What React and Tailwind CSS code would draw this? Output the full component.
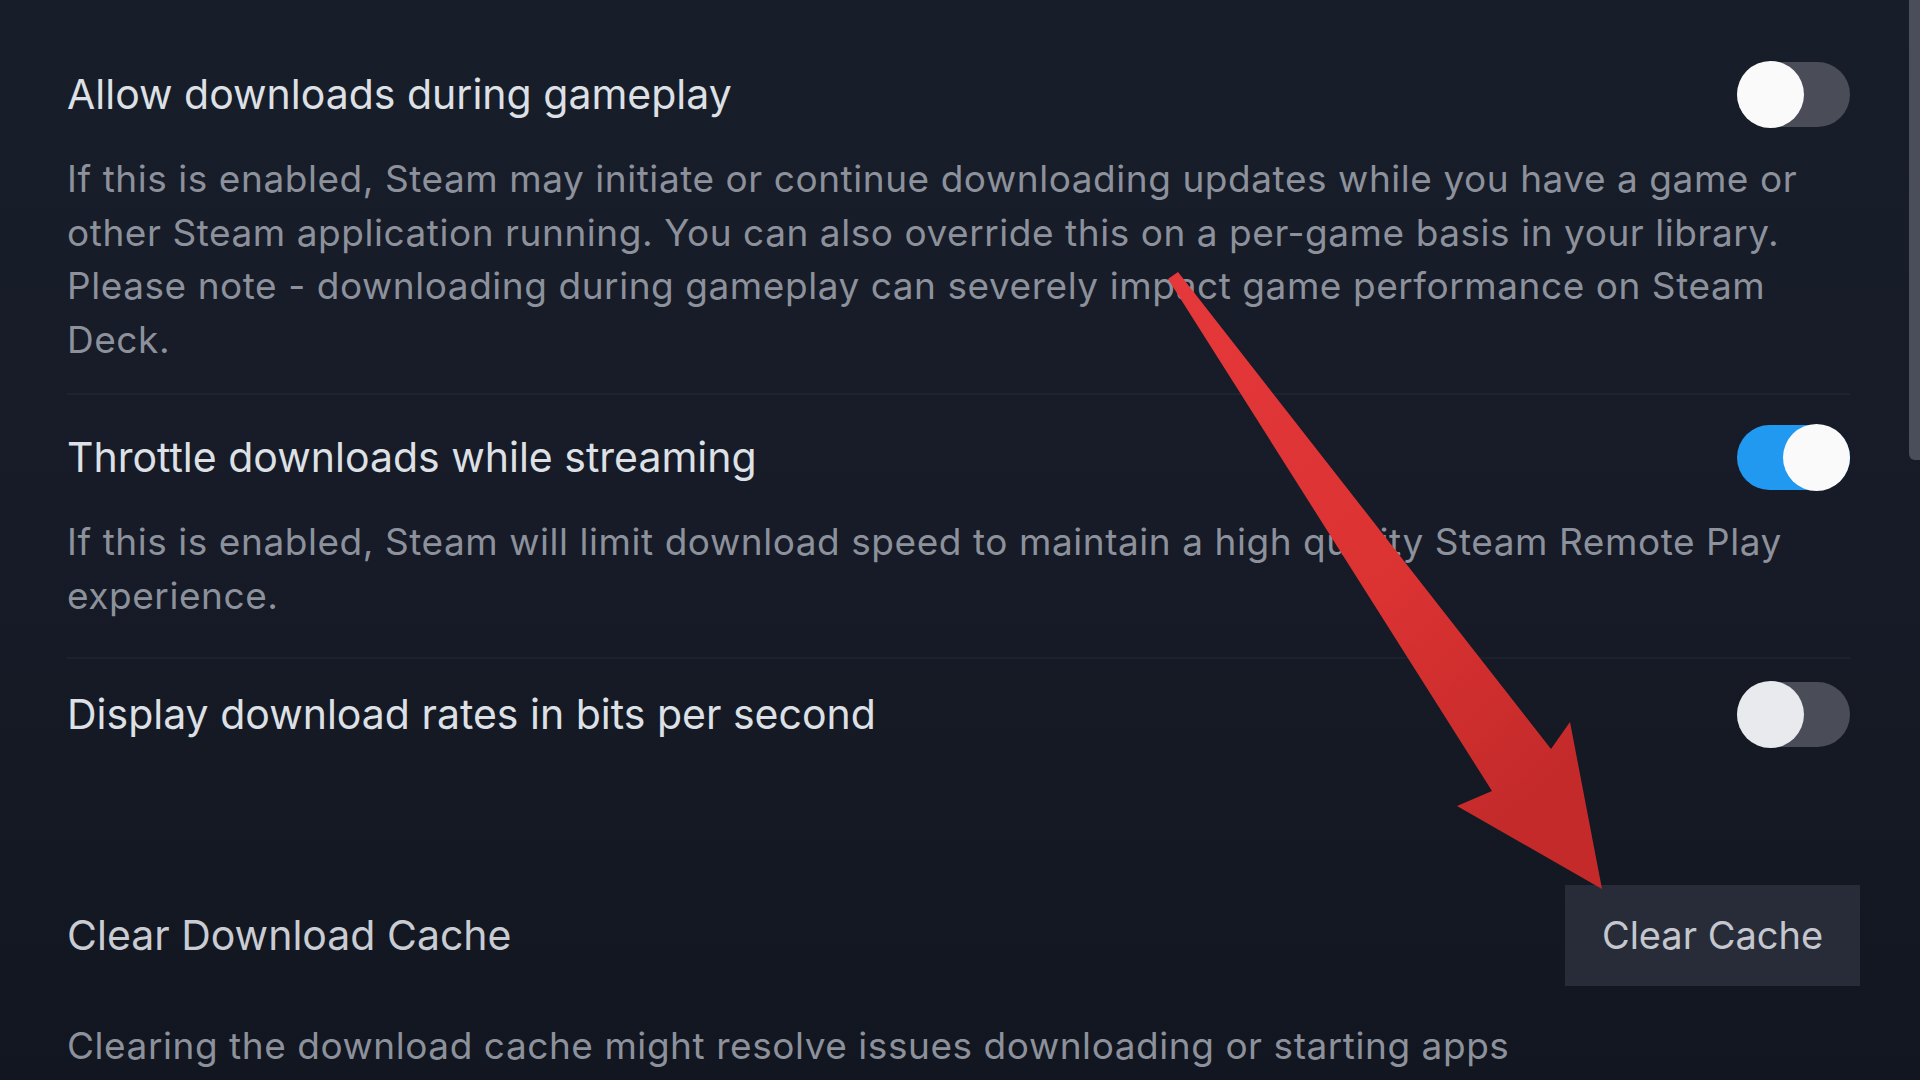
import React from "react";

function Toggle({ on, dim }) {
  return (
    <div
      className={
        on
          ? "w-[113px] h-[65px] rounded-full bg-[#2299f0] flex items-center justify-end shrink-0"
          : "w-[113px] h-[65px] rounded-full bg-[#4a4d58] flex items-center justify-start shrink-0"
      }
    >
      <div
        className={
          dim
            ? "w-[67px] h-[67px] rounded-full bg-[#e9eaed] shrink-0"
            : "w-[67px] h-[67px] rounded-full bg-[#fafafa] shrink-0"
        }
      />
    </div>
  );
}

function TitleRow({ title, on, dim }) {
  return (
    <div className="flex items-center justify-between h-[66px]">
      <div className="text-[41px] leading-none text-[#dde0e5] whitespace-nowrap">{title}</div>
      <Toggle on={on} dim={dim} />
    </div>
  );
}

function Desc({ lines, className }) {
  return (
    <div className={className}>
      {lines.map((l, i) => (
        <div key={i} className="text-[37px] tracking-[0.55px] leading-[53.5px] text-[#8c919b] whitespace-nowrap">
          {l}
        </div>
      ))}
    </div>
  );
}

export default function App() {
  return (
    <div className="relative w-[1920px] h-[1080px] overflow-hidden flex bg-gradient-to-b from-[#181d2a] via-[#161b27] to-[#121620] font-['Inter','Liberation_Sans',sans-serif]">
      <div className="flex-1 pl-[67px] pr-[59px] pt-[61px] flex flex-col">
        <TitleRow title="Allow downloads during gameplay" on={false} />
        <Desc
          className="mt-[25px]"
          lines={[
            "If this is enabled, Steam may initiate or continue downloading updates while you have a game or",
            "other Steam application running. You can also override this on a per-game basis in your library.",
            "Please note - downloading during gameplay can severely impact game performance on Steam",
            "Deck.",
          ]}
        />
        <div className="mt-[27px] h-[2px] bg-[#1d2330]" />
        <div className="mt-[29px]">
          <TitleRow title="Throttle downloads while streaming" on={true} />
        </div>
        <Desc
          className="mt-[25px]"
          lines={[
            "If this is enabled, Steam will limit download speed to maintain a high quality Steam Remote Play",
            "experience.",
          ]}
        />
        <div className="mt-[35px] h-[2px] bg-[#1b212d]" />
        <div className="mt-[22px]">
          <TitleRow title="Display download rates in bits per second" on={false} dim />
        </div>
        <div className="mt-[138px] mr-[-10px] flex items-center justify-between h-[101px]">
          <div className="text-[41px] leading-none text-[#c9ccd3] whitespace-nowrap">Clear Download Cache</div>
          <button className="w-[295px] h-[101px] bg-[#282c38] text-[38px] text-[#c4c7ce] flex items-center justify-center">
            Clear Cache
          </button>
        </div>
        <Desc
          className="mt-[33px]"
          lines={["Clearing the download cache might resolve issues downloading or starting apps"]}
        />
      </div>
      <div className="w-[11px] flex flex-col">
        <div className="h-[460px] bg-[#4a4e5a] rounded-bl-[6px]" />
      </div>

      <svg
        className="absolute inset-0 pointer-events-none"
        width="1920"
        height="1080"
        viewBox="0 0 1920 1080"
      >
        <defs>
          <linearGradient id="arrowGrad" x1="0" y1="0" x2="0.6" y2="1">
            <stop offset="0%" stopColor="#e5383a" />
            <stop offset="60%" stopColor="#db3232" />
            <stop offset="100%" stopColor="#c42a2a" />
          </linearGradient>
        </defs>
        <polygon
          points="1168,279 1178,272 1551,749 1570,722 1602,889 1457,806 1492,791"
          fill="url(#arrowGrad)"
        />
      </svg>
    </div>
  );
}
